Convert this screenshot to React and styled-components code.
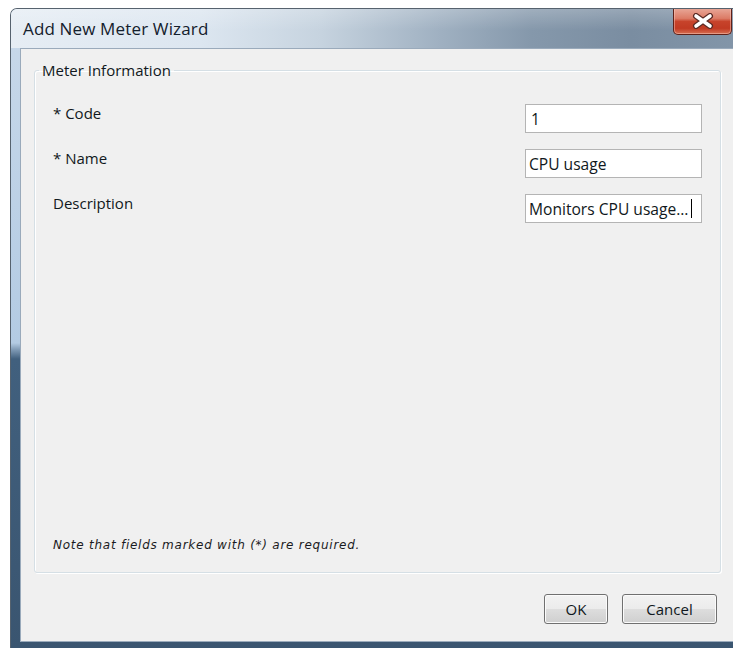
import React from 'react';
import styled, { createGlobalStyle } from 'styled-components';

const GlobalStyle = createGlobalStyle`
  html, body {
    margin: 0;
    padding: 0;
    background: #ffffff;
    overflow: hidden;
  }
  body {
    font-family: "Open Sans", "Noto Sans", sans-serif;
    color: #000;
  }
`;

const Desktop = styled.div`
  box-sizing: border-box;
  height: 648px;
  padding: 8px 0 0 10px;
`;

const Window = styled.div`
  box-sizing: border-box;
  width: 745px;
  height: 640px;
  display: flex;
  flex-direction: column;
  border: 1px solid #56626e;
  border-bottom: none;
  border-radius: 7px 7px 0 0;
  overflow: hidden;
  background: linear-gradient(
    to bottom,
    #c9d9ea 0px,
    #b3cbe3 334px,
    #7d98b3 341px,
    #41607e 350px,
    #3a5570 100%
  );
`;

const TitleBar = styled.div`
  height: 39px;
  flex: none;
  display: flex;
  align-items: flex-start;
  background:
    linear-gradient(to bottom, rgba(255, 255, 255, 0.22), rgba(255, 255, 255, 0) 55%),
    linear-gradient(
      to right,
      #e6edf4 0px,
      #dce6f0 190px,
      #c6d3df 310px,
      #9fb0c1 430px,
      #8598ab 520px,
      #7a8da1 620px,
      #8497aa 745px
    );
`;

const Title = styled.div`
  padding: 8px 0 0 12px;
  font-size: 17px;
  line-height: 23px;
  color: #14202c;
  letter-spacing: 0.15px;
  flex: 1;
`;

const CloseButton = styled.div`
  box-sizing: border-box;
  width: 59px;
  height: 27px;
  margin: -1px 22px 0 0;
  display: flex;
  align-items: center;
  justify-content: center;
  border: 1px solid #5e2119;
  border-top: none;
  border-radius: 0 0 5px 5px;
  background: linear-gradient(
    to bottom,
    #e9a99a 0%,
    #dc7b66 40%,
    #c7432b 52%,
    #c13a23 78%,
    #d66f52 100%
  );
  box-shadow: inset 0 0 0 1px rgba(255, 210, 200, 0.45);
`;

const Client = styled.div`
  flex: 1;
  margin: 0 9px 6px 9px;
  border: 1px solid #9aaabb;
  background: #f0f0f0;
  padding: 12px 0 0 13px;
  display: flex;
  flex-direction: column;
`;

const GroupBox = styled.fieldset`
  box-sizing: border-box;
  width: 687px;
  height: 512px;
  margin: 0;
  padding: 0;
  border: 1px solid #d5dfe5;
  border-radius: 3px;
  box-shadow: inset 1px 1px 0 #ffffff, 1px 1px 0 #ffffff;
`;

const Legend = styled.legend`
  margin-left: 4px;
  padding: 0 3px;
  font-size: 15px;
  line-height: 18px;
  color: #101820;
`;

const GroupBody = styled.div`
  box-sizing: border-box;
  height: 492px;
  display: flex;
  flex-direction: column;
  padding: 24px 18px 18px 18px;
`;

const Form = styled.div`
  display: grid;
  grid-template-columns: 1fr 177px;
  row-gap: 15px;
  align-items: start;
`;

const Label = styled.div`
  font-size: 15px;
  line-height: 20px;
  color: #101820;
`;

const TextBox = styled.div`
  box-sizing: border-box;
  height: 29px;
  margin-top: 1px;
  padding: 0 3px 0 ${(p) => (p.$inset ? 5 : 3)}px;
  display: flex;
  align-items: center;
  background: #ffffff;
  border: 1px solid #b4b4b4;
  font-size: 15.6px;
  white-space: nowrap;
  overflow: hidden;
  color: #101820;
`;

const Caret = styled.span`
  display: inline-block;
  width: 1px;
  height: 19px;
  margin-left: 3px;
  background: #000;
`;

const Note = styled.div`
  margin-top: auto;
  font-family: "DejaVu Sans", Verdana, sans-serif;
  font-style: italic;
  font-size: 12px;
  line-height: 16px;
  letter-spacing: 0.75px;
  color: #1a1a22;
`;

const Footer = styled.div`
  width: 683px;
  margin-top: 21px;
  display: flex;
  justify-content: flex-end;
  gap: 14px;
`;

const Button = styled.button`
  box-sizing: border-box;
  width: ${(p) => p.$width}px;
  height: 30px;
  padding: 0;
  border: 1px solid #707070;
  border-radius: 3px;
  background: linear-gradient(
    to bottom,
    #f2f2f2 0%,
    #ebebeb 50%,
    #dddddd 51%,
    #cfcfcf 100%
  );
  box-shadow: inset 0 0 0 1px #fbfbfb;
  font-family: "Open Sans", "Noto Sans", sans-serif;
  font-size: 15px;
  color: #101820;
`;

const CloseGlyph = () => (
  <svg width="24" height="16" viewBox="0 0 24 16">
    <path d="M5 3 L19 13 M19 3 L5 13" stroke="#5a2a24" strokeWidth="6" strokeLinecap="round" />
    <path d="M5 3 L19 13 M19 3 L5 13" stroke="#ffffff" strokeWidth="3.6" strokeLinecap="round" />
  </svg>
);

const fields = [
  { label: '* Code', value: '1', inset: true },
  { label: '* Name', value: 'CPU usage' },
  { label: 'Description', value: 'Monitors CPU usage…', caret: true },
];

export default function App() {
  return (
    <>
      <GlobalStyle />
      <Desktop>
        <Window>
          <TitleBar>
            <Title>Add New Meter Wizard</Title>
            <CloseButton>
              <CloseGlyph />
            </CloseButton>
          </TitleBar>
          <Client>
            <GroupBox>
              <Legend>Meter Information</Legend>
              <GroupBody>
                <Form>
                  {fields.map((f) => (
                    <React.Fragment key={f.label}>
                      <Label>{f.label}</Label>
                      <TextBox $inset={f.inset}>
                        {f.value}
                        {f.caret && <Caret />}
                      </TextBox>
                    </React.Fragment>
                  ))}
                </Form>
                <Note>Note that fields marked with (*) are required.</Note>
              </GroupBody>
            </GroupBox>
            <Footer>
              <Button $width={64}>OK</Button>
              <Button $width={95}>Cancel</Button>
            </Footer>
          </Client>
        </Window>
      </Desktop>
    </>
  );
}
